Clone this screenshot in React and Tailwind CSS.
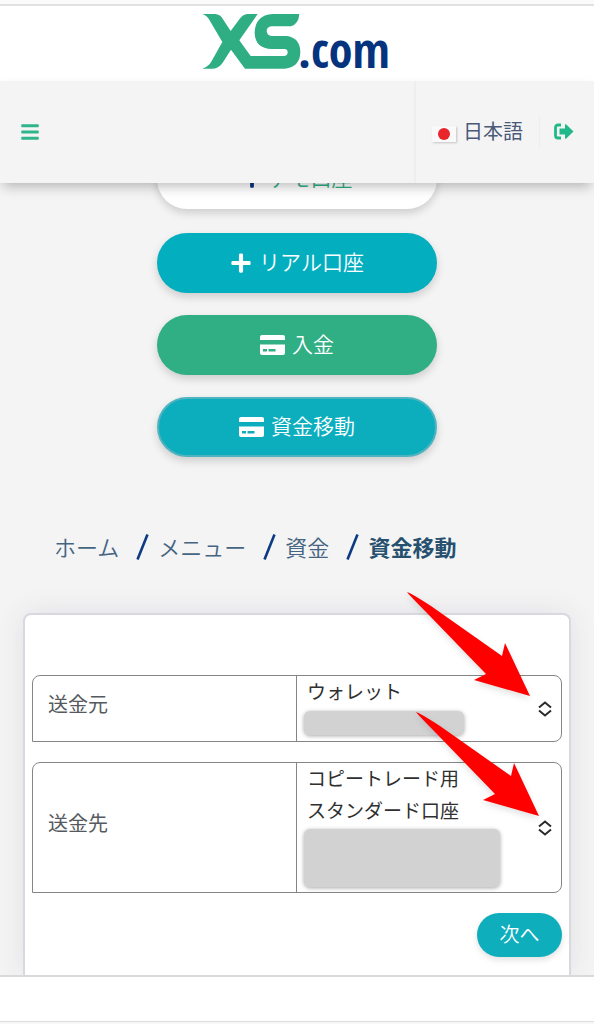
import { useState } from "react";
import { FaBars, FaPlus } from "react-icons/fa";

export default function App() {
  return (
    <div className="flex min-h-screen flex-col bg-[#f4f4f4] font-['Noto_Sans','Noto_Sans_CJK_JP',sans-serif]">
      <TopBar />
      <Header />

      {/* MAIN CONTENT */}
      <main className="flex-1 overflow-hidden">
        {/* scrolled under the header */}
        <div className="-mt-[34px] flex flex-col items-center">
          <PillButton label="デモ口座" icon={<FaPlus size={20} className="text-[#0b3180]" />} color="bg-white text-[#2fae84]" />
          <div className="mt-6 flex flex-col gap-[22px]">
            <PillButton label="リアル口座" icon={<FaPlus size={22} />} color="bg-[#03aebf] text-white" />
            <PillButton label="入金" icon={<CardIcon />} color="bg-[#30ae84] text-white" />
            <PillButton label="資金移動" icon={<CardIcon />} color="bg-[#0caebe] text-white border-2 border-[#4fb3c0]" />
          </div>
        </div>

        <nav className="mt-[72px] ml-[54px] text-[22px] leading-9 font-[350] text-[#456482]">
          <ol className="flex items-center">
            <Crumb label="ホーム" first />
            <Crumb label="メニュー" />
            <Crumb label="資金" />
            <Crumb label="資金移動" current />
          </ol>
        </nav>

        <form className="mx-[23px] mt-12 rounded-t-lg border-2 border-b-0 border-[#d8d9de] bg-white px-[7px] pt-[60px] pb-[18px] shadow-[0_0_28px_rgba(60,60,110,0.1)]">
          <SelectRow
            id="from"
            label="送金元"
            lines={["ウォレット"]}
            mask="mt-[3px] mb-[6px] h-6 w-40"
            arrow="right-[30px] bottom-[44px]"
          />
          <div className="h-5" />
          <SelectRow
            id="to"
            label="送金先"
            lines={["コピートレード用", "スタンダード口座"]}
            mask="mt-[2px] mb-[5px] h-[58px] w-[196px]"
            arrow="right-[21px] bottom-[75px]"
          />
          <div className="mt-5 flex justify-end">
            <button type="button" className="h-11 w-[85px] rounded-full bg-[#0eaebd] text-xl font-[350] text-white shadow-[0_3px_6px_rgba(0,0,0,0.12)]">
              次へ
            </button>
          </div>
        </form>
      </main>

      <footer className="flex h-[49px] flex-col justify-end border-t-2 border-[#d9d9dd] bg-white">
        <div className="h-[3px] border-t border-[#dddddd] bg-[#f7f7f7]" />
      </footer>
    </div>
  );
}

function TopBar() {
  return (
    <div className="flex h-[81px] flex-col bg-[#fbfbfb] pt-1">
      <div className="flex flex-1 justify-center border-t-2 border-[#e2e2e2] bg-white pt-[7px]">
        <a href="#" aria-label="XS.com" className="flex items-start">
          <Logo />
        </a>
      </div>
    </div>
  );
}

function Header() {
  return (
    <header className="relative z-10 flex h-[102px] items-stretch justify-between bg-[#f4f4f4] shadow-[0_6px_12px_-3px_rgba(0,0,0,0.28)]">
      <button type="button" aria-label="menu" className="pl-5 text-[#2fb58b]">
        <FaBars size={20} />
      </button>
      <div className="flex items-center border-l-2 border-[#eeeeee] pl-4">
        <a href="#" className="flex items-center gap-[7px] text-xl text-[#4a5a78]">
          <span className="mt-1 flex h-4 w-6 items-center justify-center bg-[#f9f9f9] shadow-[1px_1px_2px_rgba(0,0,0,0.2)]">
            <span className="h-3 w-3 rounded-full bg-[#e8252b]" />
          </span>
          日本語
        </a>
        <div className="ml-4 h-8 w-px bg-[#ededed]" />
        <button type="button" aria-label="logout" className="mr-5 ml-[14px]">
          <LogoutIcon />
        </button>
      </div>
    </header>
  );
}

/* --- REUSABLE COMPONENTS --- */

function PillButton({ label, icon, color }) {
  return (
    <button
      type="button"
      className={`flex h-[60px] w-[280px] items-center justify-center gap-[7px] rounded-full text-[21px] font-[350] shadow-[0_4px_8px_rgba(0,0,0,0.16)] ${color}`}
    >
      {icon}
      {label}
    </button>
  );
}

function Crumb({ label, first = false, current = false }) {
  return (
    <li className="flex items-center">
      {!first && <SlashIcon />}
      {current ? (
        <span aria-current="page" className="font-bold text-[#27506f]">{label}</span>
      ) : (
        <a href="#">{label}</a>
      )}
    </li>
  );
}

function SelectRow({ id, label, lines, mask, arrow }) {
  const text = lines.join("");
  const [value, setValue] = useState(text);

  return (
    <div className="relative flex rounded-tl-lg rounded-r-lg border border-[#858585]">
      <label htmlFor={id} className="flex w-1/2 items-center border-r border-[#858585] pb-2 pl-[15px] text-xl text-[#565a60]">
        {label}
      </label>
      <div className="relative flex w-1/2 items-center justify-between pr-[9px] pl-[7px]">
        <div>
          <div className="pl-[3px] text-[19px] leading-8 text-[#303030]">
            {lines.map((line) => (
              <p key={line}>{line}</p>
            ))}
          </div>
          <div className={`rounded-md bg-[#d2d2d2] shadow-[0_1px_4px_rgba(0,0,0,0.35)] ${mask}`} />
        </div>
        <UpDownIcon />
        <select
          id={id}
          value={value}
          onChange={(e) => setValue(e.target.value)}
          className="absolute inset-0 h-full w-full cursor-pointer opacity-0"
        >
          <option>{text}</option>
        </select>
      </div>
      <PointerArrow className={`pointer-events-none absolute z-10 ${arrow}`} />
    </div>
  );
}

/* --- ICONS --- */

function Logo() {
  return (
    <svg width="190" height="60" viewBox="0 0 190 60" role="img" className="overflow-visible">
      <g transform="scale(0.3333) translate(-36 -38)" fill="#2fae84">
        <path d="M37 41 H76 Q90 42 97 54 L122 92 L151 53 Q159 42 172 41 H203 L148 120 L182 167 H284 Q293 165 293 156 Q293 146 283 146 H245 Q196 145 194 98 Q195 44 248 41 H328 Q326 71 303 78 H245 Q230 80 230 92 Q231 106 245 107 H290 Q330 112 331 155 Q330 200 285 205 H165 L123 148 L98 187 Q86 205 65 205 H37 Q55 198 62 187 L97 125 L60 62 Q52 46 37 41Z" />
      </g>
      <text x="96" y="55" fontSize="48" fontWeight="700" fill="#05337d" fontFamily="'Open Sans Condensed', 'Noto Sans Condensed', 'Roboto Condensed', 'Lato', sans-serif">
        .com
      </text>
    </svg>
  );
}

function LogoutIcon() {
  return (
    <svg width="20" height="18" viewBox="0 0 20 18" fill="none">
      <path d="M7 2 H4 Q1.5 2 1.5 4.500 V12.500 Q1.500 15 4 15 H7" stroke="#21b98a" strokeWidth="2.800" />
      <path d="M5.500 5.500 H11 V1.500 Q11.500 0.800 12.300 1.500 L19.500 8.500 L12.300 15.500 Q11.500 16.200 11 15.500 V11.500 H5.500Z" fill="#21b98a" />
    </svg>
  );
}

function CardIcon() {
  return (
    <svg width="25" height="20" viewBox="0 0 25 20" fill="currentColor">
      <path d="M0 5 V2 Q0 0 2 0 H23 Q25 0 25 2 V5Z" />
      <path fillRule="evenodd" d="M0 9.500 H25 V18 Q25 20 23 20 H2 Q0 20 0 18Z M3 14 V16.500 H7 V14Z M8.500 14 V16.500 H15.500 V14Z" />
    </svg>
  );
}

function SlashIcon() {
  return (
    <svg width="13" height="26" viewBox="0 0 13 26" className="mr-[9px] ml-[17px]" stroke="#0b3a82" strokeWidth="2.600">
      <path d="M1.500 25.500 L11.500 0.500" />
    </svg>
  );
}

function UpDownIcon() {
  return (
    <svg width="14" height="16" viewBox="0 0 14 16" fill="none" stroke="#2c2c2c" strokeWidth="2">
      <path d="M1 6.500 L7 1.500 L13 6.500 M1 9.500 L7 14.500 L13 9.500" />
    </svg>
  );
}

function PointerArrow({ className }) {
  return (
    <svg width="124" height="105" viewBox="0 0 124 105" className={`drop-shadow-md ${className}`} fill="#ff0000">
      <path d="M0 0 Q4 1 24 14 L95 64 L98 51 L123 104 L67 88 L79 82 L19 20 Q4 5 0 0Z" />
    </svg>
  );
}
